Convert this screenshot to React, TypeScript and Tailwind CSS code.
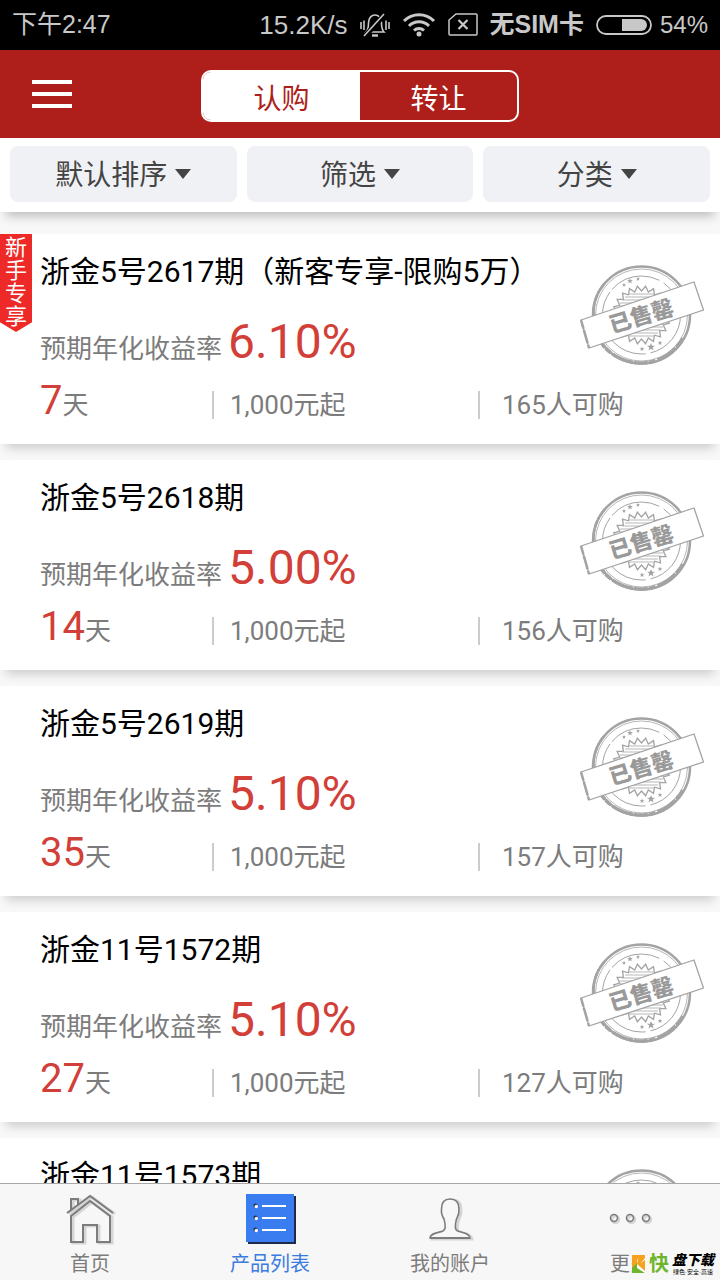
import { useState } from "react";

type Product = {
    id: number;
    name: string;
    rate: string;
    days: number;
    minimum: string;
    buyers: number;
    isNewbie?: boolean;
};

type TabName = "home" | "products" | "account" | "more";

const products: Product[] = [
    { id: 1, name: "浙金5号2617期（新客专享-限购5万）", rate: "6.10%", days: 7, minimum: "1,000元起", buyers: 165, isNewbie: true },
    { id: 2, name: "浙金5号2618期", rate: "5.00%", days: 14, minimum: "1,000元起", buyers: 156 },
    { id: 3, name: "浙金5号2619期", rate: "5.10%", days: 35, minimum: "1,000元起", buyers: 157 },
    { id: 4, name: "浙金11号1572期", rate: "5.10%", days: 27, minimum: "1,000元起", buyers: 127 },
    { id: 5, name: "浙金11号1573期", rate: "5.10%", days: 27, minimum: "1,000元起", buyers: 118 },
];

const filters = [
    { id: "sort", label: "默认排序" },
    { id: "filter", label: "筛选" },
    { id: "category", label: "分类" },
];

const tabs: { name: TabName; label: string }[] = [
    { name: "home", label: "首页" },
    { name: "products", label: "产品列表" },
    { name: "account", label: "我的账户" },
    { name: "more", label: "更多" },
];

// zigzag edge of the seal behind the banner
const sealPoints = Array.from({ length: 44 }, (_, i) => {
    const r = i % 2 === 0 ? 29 : 24;
    const a = (i * Math.PI) / 22;
    return `${(61.5 + r * Math.cos(a)).toFixed(1)},${(51 + r * Math.sin(a)).toFixed(1)}`;
}).join(" ");

const starPath = "M0-4 1.1-1.3 4-1.2 1.7.6 2.5 3.5 0 1.8-2.5 3.5-1.7.6-4-1.2-1.1-1.3Z";

function StatusBar() {
    return (
        <div className="flex h-[50px] shrink-0 items-center justify-between bg-black px-3 text-[#c8c8c8]
                        font-['Liberation_Sans','Noto_Sans_CJK_SC',sans-serif]">
            <span className="text-[25px]">下午2:47</span>
            <div className="flex items-center gap-3">
                <span className="text-[26px]">15.2K/s</span>
                <svg width="30" height="26" viewBox="0 0 30 26" fill="none" stroke="currentColor" strokeWidth="1.6">
                    <path d="M6 20h18c-2-2-2.5-4-2.5-9 0-5-3-8-6.500-8S8.500 6 8.500 11c0 5-.5 7-2.500 9Z" />
                    <path d="M12 23.500h6" strokeWidth="2.400" />
                    <path d="M5 24 25 2" stroke="#000" strokeWidth="5" />
                    <path d="M4 24 24 2M1 10v7M4 8.500v9.500M26 8.500v9.500M29 10v7" />
                </svg>
                <svg width="34" height="26" viewBox="0 0 34 26" fill="none" stroke="currentColor" strokeWidth="3">
                    <path d="M2 9a21 21 0 0 1 30 0M7 14a14 14 0 0 1 20 0M12 18.500a7.500 7.500 0 0 1 10 0" />
                    <circle cx="17" cy="22" r="2.500" fill="currentColor" stroke="none" />
                </svg>
                <svg width="30" height="26" viewBox="0 0 30 26" fill="none" stroke="currentColor" strokeWidth="1.500">
                    <path d="M8 2h20a1 1 0 0 1 1 1v19a1 1 0 0 1-1 1H2a1 1 0 0 1-1-1V8Z" />
                    <path d="m10.500 8 9 9m0-9-9 9" strokeWidth="2.200" />
                </svg>
                <span className="text-[25px] font-bold">无SIM卡</span>
                <div className="flex items-center gap-2">
                    <svg width="56" height="22" viewBox="0 0 56 22">
                        <rect x="1" y="2" width="54" height="18" rx="9" fill="none" stroke="currentColor" strokeWidth="1.800" />
                        <path d="M26 5h19a6 6 0 0 1 0 12H26Z" fill="currentColor" />
                    </svg>
                    <span className="text-[24px]">54%</span>
                </div>
            </div>
        </div>
    );
}

function Header() {
    const [mode, setMode] = useState<"buy" | "transfer">("buy");
    const active = "bg-white pt-2 text-[#ae1f1b]";
    const idle = "pt-2 text-white";

    return (
        <header className="grid h-[88px] shrink-0 grid-cols-[1fr_318px_1fr] items-center bg-[#ae1f1b] px-8">
            <button type="button" aria-label="菜单" className="flex w-10 flex-col gap-2">
                <span className="h-1 bg-white" />
                <span className="h-1 bg-white" />
                <span className="h-1 bg-white" />
            </button>
            <div className="mt-1 grid h-[52px] grid-cols-2 overflow-hidden rounded-[10px] border-2 border-white text-[28px] leading-10">
                <button type="button" className={mode === "buy" ? active : idle} onClick={() => setMode("buy")}>
                    认购
                </button>
                <button type="button" className={mode === "transfer" ? active : idle} onClick={() => setMode("transfer")}>
                    转让
                </button>
            </div>
        </header>
    );
}

function FilterBar() {
    return (
        <div className="relative z-10 grid h-[74px] shrink-0 grid-cols-3 gap-[10px] bg-white px-[10px] pt-2 pb-[10px]
                        shadow-[0_10px_10px_-6px_rgba(0,0,0,0.25)]">
            {filters.map((f) => (
                <label
                    key={f.id}
                    className="flex items-center justify-center gap-2 rounded-lg bg-[#f0f1f5] text-[28px] text-[#444]"
                >
                    <select aria-label={f.label} className="appearance-none bg-transparent pt-1 [field-sizing:content]">
                        <option>{f.label}</option>
                    </select>
                    <svg width="16" height="10" viewBox="0 0 16 10" fill="currentColor">
                        <path d="M0 0h16L8 10Z" />
                    </svg>
                </label>
            ))}
        </div>
    );
}

function SoldOutStamp() {
    return (
        <svg width="124" height="102" viewBox="0 0 124 102" fill="none" stroke="#a3a3a3">
            <circle cx="61.5" cy="51" r="48.5" strokeWidth="2.500" />
            <circle cx="61.5" cy="51" r="46" strokeWidth="0.800" />
            <path d="M17 72C25 88 40 98 60 99c20 0 35-11 43-25" strokeWidth="3.500" strokeDasharray="14 1 7 2 22 1" />
            <path d="M14 55c-2-14 3-27 11-36" strokeWidth="2.500" strokeDasharray="3 1 8 1" />
            <circle cx="61.5" cy="51" r="39" strokeWidth="1" strokeDasharray="52 5 90 3" />
            <polygon points={sealPoints} strokeWidth="1.300" />
            <path
                d="M49 30h25M45 33h33M42 36h39M40 39h43M39 42h45M39 60h45M40 63h43M42 66h39M45 69h33M49 72h25"
                strokeWidth="1.200"
                stroke="#b8b8b8"
            />
            <g fill="#a3a3a3" stroke="none">
                <path d={starPath} transform="translate(44 21) scale(.5)" />
                <path d={starPath} transform="translate(50 17) scale(.7)" />
                <path d={starPath} transform="translate(58 15) scale(.5)" />
                <path d={starPath} transform="translate(62 85) scale(.6)" />
                <path d={starPath} transform="translate(71 83)" />
                <path d={starPath} transform="translate(80 79) scale(.6)" />
            </g>
            <path d="M1 56 114 18l9.500 28L9 84Z" fill="#fff" strokeWidth="1.300" />
            <path d="M1 56 9 84" strokeWidth="2.500" strokeDasharray="9 1 14 2" />
            <text
                x="61"
                y="60"
                textAnchor="middle"
                fontSize="22"
                transform="rotate(-17 61 51)"
                fill="#999"
                stroke="none"
                className="font-['Noto_Sans_CJK_SC',sans-serif] font-black"
            >
                已售罄
            </text>
        </svg>
    );
}

function ProductCard({ product }: { product: Product }) {
    return (
        <li className="relative h-[210px] shrink-0 bg-white pt-[18px] pl-10 shadow-[0_10px_10px_-6px_rgba(0,0,0,0.18)]">
            {product.isNewbie && (
                <span className="absolute top-0 left-0 flex h-[98px] w-8 flex-col items-center bg-[#ee2a28] pt-[2px]
                                 text-[22px] leading-[23px] text-white
                                 [clip-path:polygon(0_0,100%_0,100%_90%,50%_100%,0_90%)]">
                    {"新手专享".split("").map((c) => <span key={c}>{c}</span>)}
                </span>
            )}
            <div className="absolute top-[30px] right-4">
                <SoldOutStamp />
            </div>
            <h2 className="text-[30px] leading-10 text-black">{product.name}</h2>
            <p className="mt-5 flex items-baseline gap-[6px] text-[26px] leading-[60px] text-[#7c7c7c]">
                预期年化收益率
                <span className="text-[48px] text-[#d23f38]">{product.rate}</span>
            </p>
            <div className="mt-[2px] grid grid-cols-[172fr_266fr_242fr] items-end text-[26px] leading-10 text-[#7c7c7c]">
                <span>
                    <span className="text-[40px] text-[#d23f38]">{product.days}</span>天
                </span>
                <span className="flex items-center gap-4">
                    <span className="h-7 w-[2px] bg-[#ccc]" />
                    {product.minimum}
                </span>
                <span className="flex items-center gap-[22px]">
                    <span className="h-7 w-[2px] bg-[#ccc]" />
                    {product.buyers}人可购
                </span>
            </div>
        </li>
    );
}

function TabIcon({ name }: { name: TabName }) {
    if (name === "home") {
        const house = "M1 19 24 2l23 17M5 16V5h7v6M5 22v26h12V31h14v17h13V22L24 7 5 22Z";
        return (
            <svg width="48" height="50" viewBox="0 0 48 50" fill="none" strokeWidth="2" className="overflow-visible">
                <path d={house} stroke="#d5d5d5" strokeWidth="3" transform="translate(2 1)" />
                <path d={house} stroke="#7c7c7c" />
            </svg>
        );
    }
    if (name === "products") {
        return (
            <svg width="48" height="50" viewBox="0 0 48 50" className="overflow-visible">
                <path d="M2 2h48v48H2Z" fill="#1c2b47" />
                <path d="M0 0h48v48H0Z" fill="#3a7df0" />
                <path d="M16 12h24M16 24h24M16 36h24" stroke="#fff" strokeWidth="2" />
                <g fill="#1c2b47">
                    <circle cx="9.500" cy="11.500" r="2" />
                    <circle cx="9.500" cy="23.500" r="2" />
                    <circle cx="9.500" cy="35.500" r="2" />
                </g>
                <g fill="#fff">
                    <circle cx="10.300" cy="12.500" r="1.700" />
                    <circle cx="10.300" cy="24.500" r="1.700" />
                    <circle cx="10.300" cy="36.500" r="1.700" />
                </g>
            </svg>
        );
    }
    if (name === "account") {
        const person = "M4 44c0-5 8-5 13-7 4-2 2-8 1-12-2-3-3-5-2.500-10C15.500 8 18 5 24 5s9 3 9 10c.5 5-1 7-2.500 10-1 4-3 10 1 12 5 2 12 2 12.500 7Z";
        return (
            <svg width="48" height="50" viewBox="0 0 48 50" fill="none" className="overflow-visible">
                <path d={person} stroke="#d5d5d5" strokeWidth="3" transform="translate(2 1)" />
                <path d={person} stroke="#7c7c7c" strokeWidth="1.600" fill="#f7f7f7" />
                <path d="M4 44h40" stroke="#7c7c7c" strokeWidth="2" />
            </svg>
        );
    }
    return (
        <svg width="48" height="50" viewBox="0 0 48 50" fill="none" className="overflow-visible">
            <g stroke="#d5d5d5" strokeWidth="2.500">
                <circle cx="9.500" cy="25.500" r="3.500" />
                <circle cx="25.500" cy="25.500" r="3.500" />
                <circle cx="41.500" cy="25.500" r="3.500" />
            </g>
            <g stroke="#7c7c7c" strokeWidth="1.600">
                <circle cx="8" cy="24" r="3.500" />
                <circle cx="24" cy="24" r="3.500" />
                <circle cx="40" cy="24" r="3.500" />
            </g>
        </svg>
    );
}

function SiteMark() {
    return (
        <div className="absolute right-[6px] bottom-1 flex items-center gap-[3px] bg-[#f7f7f7] text-black
                        font-['Liberation_Sans','Noto_Sans_CJK_SC',sans-serif]">
            <svg width="14" height="18" viewBox="0 0 14 18">
                <path d="M0 0h13v18H0Z" fill="#f6a21e" />
                <path d="M0 18v-5l5-5 8 10Z" fill="#6fb52c" />
                <path d="M9 0 5 5v8l8 5h1v-3L8 9l6-5V0Z" fill="#fff" />
                <path d="M7 0h6v3L9 8l4 5v3L5 9Z" fill="#f6a21e" />
            </svg>
            <span className="text-[20px] leading-6 font-bold text-[#6fb52c]">快</span>
            <span className="flex flex-col items-center">
                <span className="text-[14px] leading-4 font-black italic">盘下载</span>
                <span className="text-[6px] leading-[8px]">绿色·安全·高速</span>
            </span>
        </div>
    );
}

function TabBar() {
    const [current, setCurrent] = useState<TabName>("products");

    return (
        <nav className="relative grid h-[97px] shrink-0 grid-cols-4 border-t border-[#a8a8a8] bg-[#f7f7f7]">
            {tabs.map((t) => (
                <button
                    key={t.name}
                    type="button"
                    onClick={() => setCurrent(t.name)}
                    className={`flex flex-col items-center gap-1 pt-[10px] text-[20px] leading-8
                                ${current === t.name ? "text-[#3a7be0]" : "text-[#7c7c7c]"}`}
                >
                    <TabIcon name={t.name} />
                    <span>{t.label}</span>
                </button>
            ))}
            <SiteMark />
        </nav>
    );
}

export default function App() {
    return (
        <div className="flex h-screen flex-col overflow-hidden bg-[#f8f8f8] font-['Roboto','Noto_Sans_CJK_SC',sans-serif]">
            <StatusBar />
            <Header />
            <FilterBar />
            <main className="min-h-0 flex-1 overflow-y-auto [scrollbar-width:none]">
                <ul className="flex flex-col gap-4 pt-[22px]">
                    {products.map((p) => (
                        <ProductCard key={p.id} product={p} />
                    ))}
                </ul>
            </main>
            <TabBar />
        </div>
    );
}
